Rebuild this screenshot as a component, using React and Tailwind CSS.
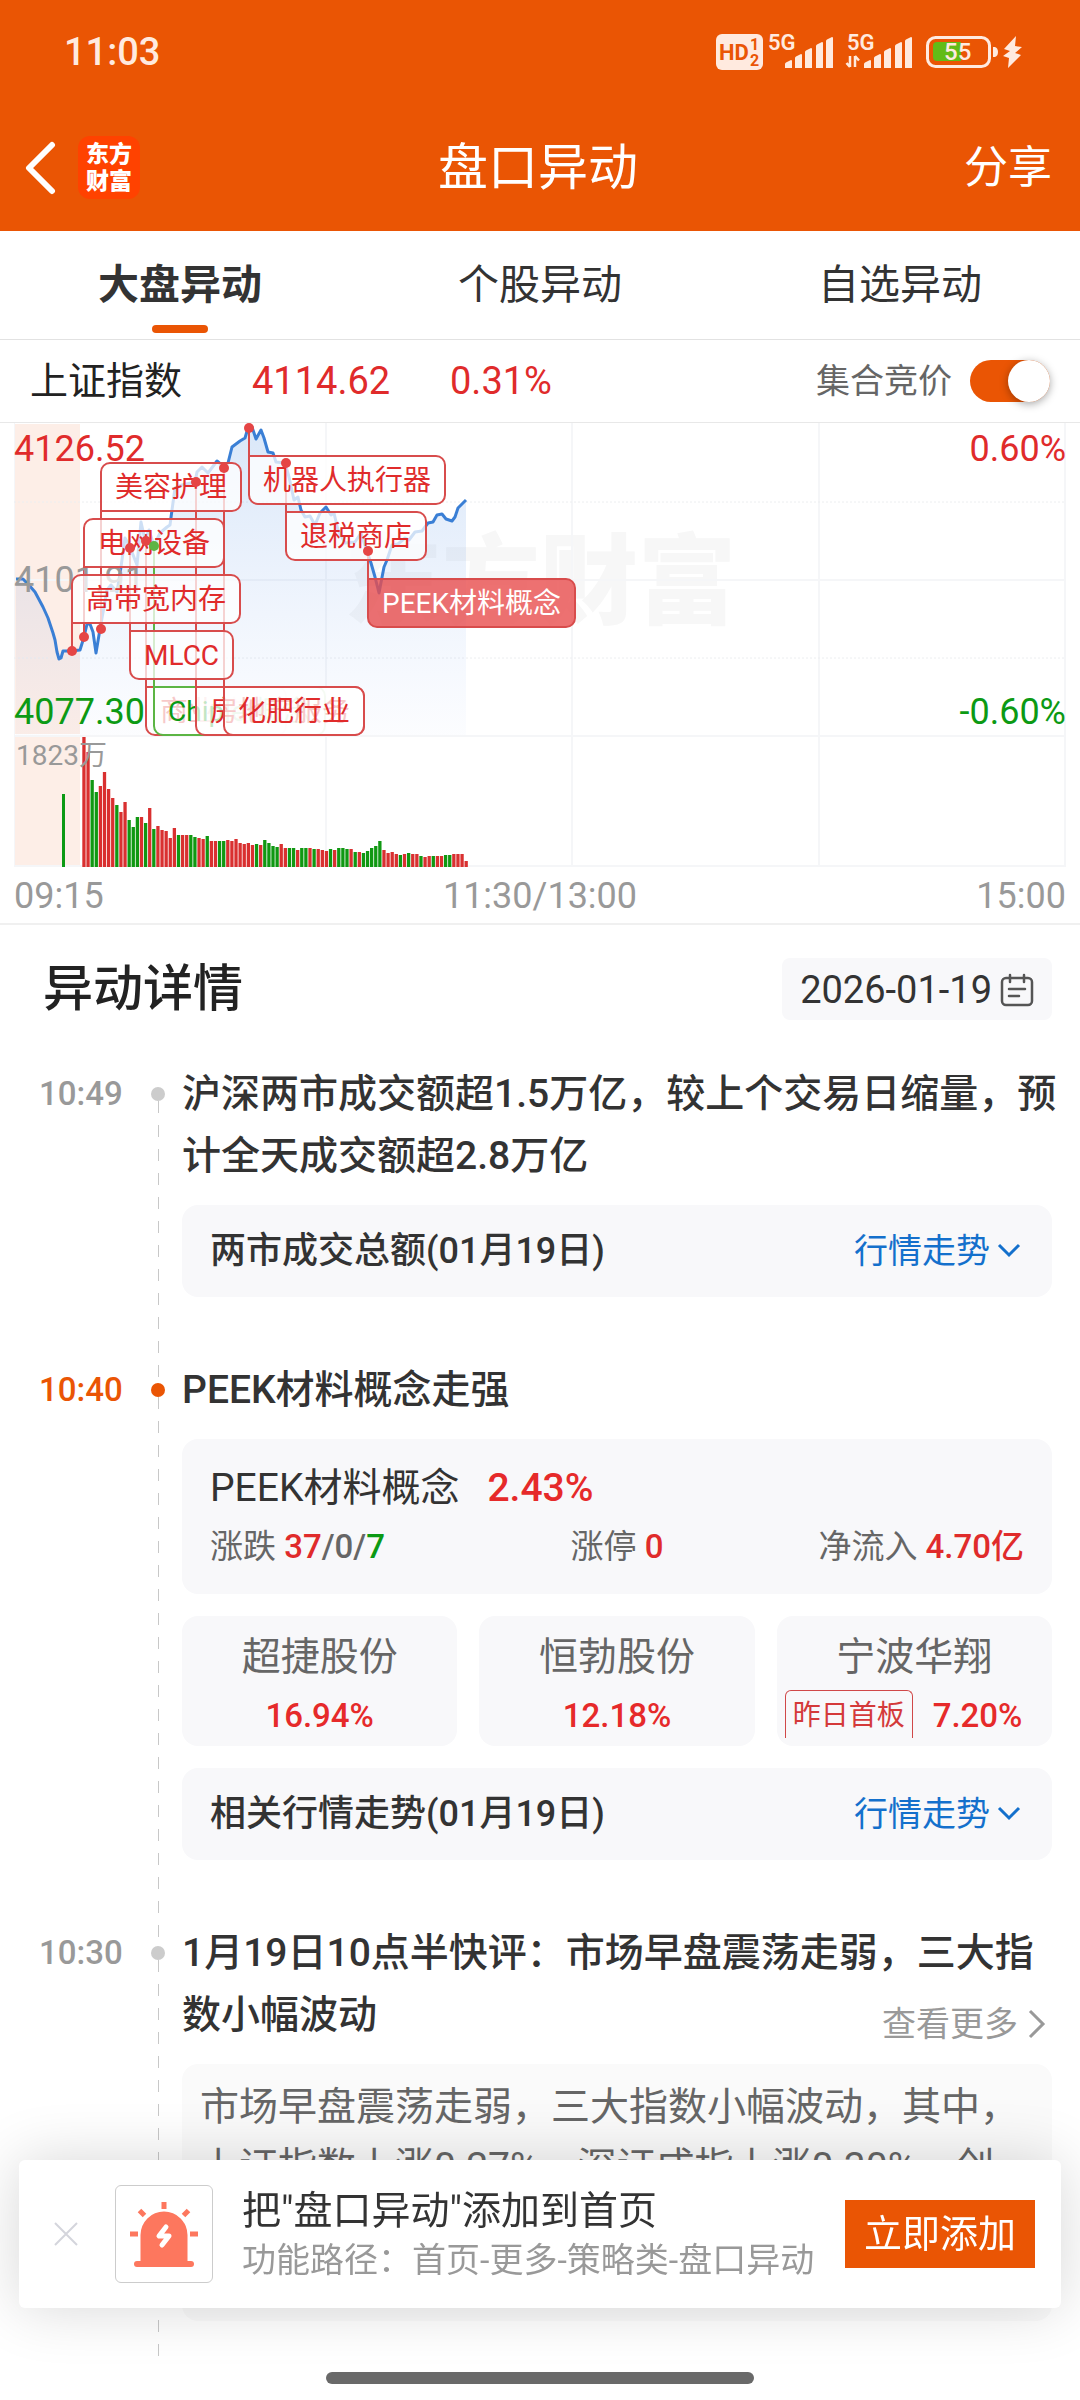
import { useState } from 'react';

const TABS = ['大盘异动', '个股异动', '自选异动'];

// chart area: 1052 x 444 units, price panel on top (0-312), volume below (314-444)
const CHART_W = 1052;
const CHART_H = 444;

const PRICE = [
  [2, 156], [9, 156], [14, 161], [21, 169], [29, 184], [34, 195], [39, 210], [41, 217], [43, 229], [45, 236],
  [47, 235], [49, 228], [57, 228], [66, 227], [70, 214], [73, 201], [76, 201], [79, 209], [82, 230], [86, 206],
  [90, 184], [93, 167], [97, 162], [103, 169], [107, 144], [111, 115], [116, 124], [123, 142], [127, 99], [131, 117],
  [135, 107], [140, 123], [146, 110], [153, 104], [156, 102], [158, 87], [161, 65], [168, 62], [181, 59], [183, 49],
  [188, 44], [194, 50], [203, 38], [210, 44], [214, 40], [218, 24], [226, 18], [231, 15], [234, 5], [238, 4],
  [242, 16], [247, 7], [250, 15], [254, 29], [259, 30], [262, 39], [271, 40], [275, 54], [280, 77], [284, 74],
  [287, 87], [291, 94], [296, 93], [301, 102], [306, 90], [312, 84], [317, 92], [320, 90], [324, 107], [331, 120],
  [341, 119], [347, 110], [353, 129], [357, 140], [361, 154], [365, 170], [370, 144], [373, 137], [378, 122], [384, 121],
  [391, 115], [395, 117], [401, 109], [408, 108], [414, 100], [419, 99], [423, 92], [428, 91], [432, 96], [438, 98],
  [441, 94], [444, 85], [452, 77],
];

const VOLUME =
  'r130 r115 g87 g75 r81 r95 r78 r69 g62 r55 r65 g47 g40 g50 r50 g44 r59 g38 r41 r37 r36 r29 r39 g32 r32 r32 g32 g30 r29 r28 g31 r26 r26 g26 g26 r27 r26 r28 r24 r23 r24 r22 g23 r22 g27 g24 g21 g20 r23 r19 g19 g19 r17 g19 g19 r19 g18 r18 r17 r16 g18 r17 g19 g19 g18 r18 g15 r15 g14 g16 g19 g21 g26 r17 r14 r15 r13 g12 r13 g14 r13 r13 g11 r10 r11 g11 r11 r11 g12 g12 r13 r13 r13 r6'
    .split(' ')
    .map((s) => ({ up: s[0] === 'r', h: Number(s.slice(1)) }));

// x: tag and leader position, y: top of the tag, dot: y of the point on the line
const MARKS = [
  { name: '高带宽内存', x: 57, y: 151, dot: 228 },
  { name: '电网设备', x: 69, y: 95, dot: 214 },
  { name: '美容护理', x: 86, y: 39, dot: 206 },
  { name: 'MLCC', x: 115, y: 207, dot: 125 },
  { name: '商业航天', x: 131, y: 263, dot: 118 },
  { name: 'Chiplet概念', x: 139, y: 263, dot: 123, tone: 'down' },
  { name: '房地产服务', x: 181, y: 263, dot: 59 },
  { name: '化肥行业', x: 209, y: 263, dot: 45 },
  { name: '机器人执行器', x: 234, y: 32, dot: 5 },
  { name: '退税商店', x: 271, y: 88, dot: 40 },
  { name: 'PEEK材料概念', x: 353, y: 155, dot: 128, tone: 'active' },
];

const TAG_TONE = {
  up: 'border-[#d84c4c] bg-white/75 text-[#e02b2b]',
  down: 'border-[#5cb544] bg-white/75 text-[#0c9a14]',
  active: 'border-[#d84c4c] bg-[#e94d4d]/80 text-white',
};

function StatusBar() {
  const bars = [
    [0, 26], [10, 20], [20, 14], [31, 8], [41, 3],
  ];
  return (
    <div className="flex h-[104px] items-center justify-between pr-[58px] pl-16 text-[#ffeadf]">
      <span className="text-[38px] leading-none font-medium">11:03</span>
      <svg width="306" height="52" viewBox="0 -8 306 52" fill="currentColor">
        <rect x="0" y="0" width="47" height="36" rx="6" />
        <text x="3" y="26" fontSize="22" fontWeight="700" fill="#ea5504">HD</text>
        <text x="34" y="16" fontSize="16" fontWeight="700" fill="#ea5504">1</text>
        <text x="34" y="32" fontSize="16" fontWeight="700" fill="#ea5504">2</text>
        {[69, 148].map((x) => (
          <g key={x}>
            <text x={x - 17} y="16" fontSize="22" fontWeight="600">5G</text>
            {bars.map(([dx, top]) => (
              <path key={dx} d={`M${x + dx} 34V${top + 4}q0-1 1-1.500l5-2.500q1 0 1 1V34z`} />
            ))}
          </g>
        ))}
        <path d="M134 22v11M134 33l-3.500-4M139 33V22M139 22l4 4.500" fill="none" stroke="currentColor" strokeWidth="2.500" />
        <rect x="211.500" y="3.500" width="62" height="29" rx="8" fill="none" stroke="currentColor" strokeWidth="3" />
        <path d="M217 12q0-4 4-4h24v19h-24q-4 0-4-4z" fill="#62bb17" />
        <path d="M277 13h2q3 1 3 5t-3 5h-2z" />
        <text x="228" y="26" fontSize="24" fontWeight="500">55</text>
        <path d="M300 2l-12 13 6 2-7 5 6 2-1 10 13-13-6-2 7-6-7-1z" />
      </svg>
    </div>
  );
}

function NavBar() {
  return (
    <div className="grid h-[127px] grid-cols-3 items-center pr-7 pl-6 text-white">
      <div className="flex items-center gap-[22px]">
        <button type="button" aria-label="返回">
          <svg width="32" height="54" viewBox="0 0 32 54" fill="none" stroke="currentColor" strokeWidth="6" strokeLinecap="round" strokeLinejoin="round">
            <path d="M28 4L5 27l23 23" />
          </svg>
        </button>
        <span className="flex h-[63px] w-[62px] flex-col items-center justify-center rounded-xl bg-[#ff4200] text-[23px] leading-[27px] font-black">
          <span>东方</span>
          <span>财富</span>
        </span>
      </div>
      <h1 className="text-center text-[50px] leading-none">盘口异动</h1>
      <button type="button" className="justify-self-end text-[44px] leading-none">
        分享
      </button>
    </div>
  );
}

function IndexRow({ auction, onToggle }) {
  return (
    <div className="flex h-[83px] items-center justify-between border-b border-[#e8e8e8] px-[30px]">
      <div className="flex items-center text-[38px] leading-none text-[#e02b2b]">
        <span className="w-[222px] text-[#222]">上证指数</span>
        <span className="w-[198px]">4114.62</span>
        <span>0.31%</span>
      </div>
      <label className="flex items-center gap-[18px] text-[34px] leading-none text-[#666]">
        集合竞价
        <input
          type="checkbox"
          role="switch"
          checked={auction}
          onChange={onToggle}
          className="flex h-[42px] w-20 appearance-none rounded-full bg-gray-300 before:h-[42px] before:w-[42px] before:rounded-full before:bg-white before:shadow-[0_2px_8px_rgba(0,0,0,0.35)] checked:justify-end checked:bg-[#ea5504]"
        />
      </label>
    </div>
  );
}

function Chart() {
  const line = PRICE.map(([x, y]) => `${x},${y}`).join(' ');
  return (
    <div className="relative mx-[14px] h-[444px] text-[36px] leading-none">
      <span className="absolute inset-x-0 top-[111px] text-center text-[98px] font-black text-[#f7f7f7]">东方财富</span>
      <svg className="absolute inset-0 h-full w-full" viewBox={`0 0 ${CHART_W} ${CHART_H}`} preserveAspectRatio="none">
        <defs>
          <linearGradient id="area" x1="0" y1="0" x2="0" y2="1">
            <stop offset="0" stopColor="#2f7ddb" stopOpacity="0.18" />
            <stop offset="1" stopColor="#5b8def" stopOpacity="0.02" />
          </linearGradient>
        </defs>
        <rect x="1" y="1" width="65" height="310" fill="#fdeee7" />
        <rect x="1" y="314" width="65" height="129" fill="#fdeee7" />
        <g stroke="#f5f6f8" strokeWidth="2">
          <path d="M0 157H1052M0 313H1052M0 443H1052M0 0V443M312 0V443M558 0V443M805 0V443M1051 0V443" />
          <path d="M0 79H1052M0 235H1052" strokeDasharray="2 2" strokeWidth="1" stroke="#eceef0" />
        </g>
        <polygon points={`2,312 ${line} 452,312`} fill="url(#area)" />
        <polyline points={line} fill="none" stroke="#3a7fd5" strokeWidth="3" strokeLinejoin="round" />
        <rect x="48" y="371" width="3" height="73" fill="#0c9a14" />
        {VOLUME.map((v, i) => (
          <rect
            key={i}
            x={68.3 + i * 4.11}
            y={CHART_H - v.h}
            width="3.300"
            height={v.h}
            fill={v.up ? '#d93030' : '#109812'}
          />
        ))}
        {MARKS.map((m) => (
          <path
            key={m.name}
            d={`M${m.x + 1} ${m.dot}V${m.y + 24}`}
            stroke={m.tone === 'down' ? '#5cb544' : '#d84c4c'}
            strokeWidth="2"
          />
        ))}
      </svg>

      <span className="absolute top-2 left-0 text-[#e02b2b]">4126.52</span>
      <span className="absolute top-[139px] left-0 text-[#999]">4101.91</span>
      <span className="absolute top-[271px] left-0 text-[#0c9a14]">4077.30</span>
      <span className="absolute top-2 right-0 text-[#e02b2b]">0.60%</span>
      <span className="absolute top-[271px] right-0 text-[#0c9a14]">-0.60%</span>
      <span className="absolute top-[319px] left-[2px] text-[28px] text-[#999]">1823万</span>

      {MARKS.map((m) => (
        <span
          key={m.name}
          className={`absolute flex h-[50px] items-center rounded-[10px] border-2 px-[13px] pt-[2px] text-[28px] whitespace-nowrap ${
            m.dot < m.y ? 'rounded-tl-none' : 'rounded-bl-none'
          } ${TAG_TONE[m.tone || 'up']}`}
          style={{ left: `${(m.x / CHART_W) * 100}%`, top: m.y }}
        >
          {m.name}
        </span>
      ))}

      <svg className="absolute inset-0 h-full w-full overflow-visible" viewBox={`0 0 ${CHART_W} ${CHART_H}`} preserveAspectRatio="none">
        {MARKS.map((m) => (
          <circle key={m.name} cx={m.x + 1} cy={m.dot} r="5" fill={m.tone === 'down' ? '#5cb544' : '#e54545'} />
        ))}
      </svg>
    </div>
  );
}

function CalendarIcon() {
  return (
    <svg width="34" height="34" viewBox="0 -2 34 34" fill="none" stroke="#555" strokeWidth="2.500" strokeLinecap="round">
      <rect x="2" y="3" width="30" height="27" rx="4" />
      <path d="M10 0v7M24 0v7M9 14h16M9 21h10" />
    </svg>
  );
}

function TimelineItem({ time, active, last, children }) {
  return (
    <li className="flex">
      <time className={`w-[112px] shrink-0 text-[33px] leading-[62px] font-medium ${active ? 'text-[#ea5504]' : 'text-[#999]'}`}>
        {time}
      </time>
      {/* the dashed rail runs on to the dot of the next item */}
      <div className={`flex w-[31px] shrink-0 flex-col pt-6 ${last ? '' : '-mb-6'}`}>
        <span className={`size-[14px] shrink-0 rounded-full ${active ? 'bg-[#ea5504]' : 'bg-[#ccc]'}`} />
        <span className="ml-[7px] w-px grow bg-[repeating-linear-gradient(to_bottom,#c8c8c8_0_12px,transparent_12px_24px)]" />
      </div>
      <div className={`min-w-0 grow ${last ? 'pb-9' : 'pb-[62px]'}`}>{children}</div>
    </li>
  );
}

function ItemTitle({ children }) {
  return <h3 className="text-[39px] leading-[62px] font-medium whitespace-nowrap text-[#333]">{children}</h3>;
}

function TrendCard({ title }) {
  return (
    <div className="flex h-[92px] items-center justify-between rounded-2xl bg-[#f8f8fa] px-7">
      <span className="text-[36px] leading-none font-medium text-[#333]">{title}</span>
      <button type="button" className="flex items-center gap-[6px] text-[34px] leading-none text-[#1470cc]">
        行情走势
        <svg width="28" height="18" viewBox="0 0 28 18" fill="none" stroke="currentColor" strokeWidth="3">
          <path d="M3 3l10 10L23 3" />
        </svg>
      </button>
    </div>
  );
}

function StockCard({ name, change, tag }) {
  return (
    <div className="flex h-[130px] flex-col gap-1 overflow-hidden rounded-2xl bg-[#f8f8fa] pt-3">
      <span className="text-center text-[39px] leading-[58px] text-[#666]">{name}</span>
      <div className={`flex items-start gap-5 ${tag ? 'pl-2' : 'justify-center'}`}>
        {tag && (
          <span className="h-12 shrink-0 rounded-t-md border border-b-0 border-[#d04848] px-[7px] text-[28px] leading-[50px] text-[#d43a3a]">
            {tag}
          </span>
        )}
        <span className="text-[33px] leading-[52px] font-medium text-[#e62a2a]">{change}</span>
      </div>
    </div>
  );
}

function AddBanner({ onClose }) {
  return (
    <div className="fixed inset-x-[19px] bottom-[92px] flex h-[148px] items-center rounded-md bg-white pr-[26px] pl-8 shadow-[0_0_60px_rgba(0,0,0,0.16)]">
      <button type="button" aria-label="关闭" onClick={onClose} className="mr-[34px]">
        <svg width="30" height="30" viewBox="0 0 30 30" stroke="#d4d5dc" strokeWidth="2">
          <path d="M4 4l22 22M26 4L4 26" />
        </svg>
      </button>
      <span className="mr-[29px] flex size-[98px] shrink-0 items-center justify-center rounded-md border border-[#ccc]">
        <svg width="68" height="66" viewBox="0 0 68 66">
          <g fill="#fd775e">
            <path d="M10.500 60V34a23.500 23.500 0 0 1 47 0v26z" />
            <rect x="4" y="60" width="60" height="6" rx="3" />
          </g>
          <g stroke="#fd775e" strokeWidth="5">
            <path d="M34 1v7M9.500 9.500l5 5M58.500 9.500l-5 5M0 33h8M60 33h8" />
          </g>
          <path d="M36 26l-7 9h10l-7 9" fill="none" stroke="#fff" strokeWidth="5" strokeLinecap="round" strokeLinejoin="round" />
        </svg>
      </span>
      <div className="grow whitespace-nowrap">
        <p className="text-[39px] leading-[52px] text-[#333]">把"盘口异动"添加到首页</p>
        <p className="text-[34px] leading-[46px] text-[#999]">功能路径：首页-更多-策略类-盘口异动</p>
      </div>
      <button type="button" className="h-[68px] w-[190px] shrink-0 bg-[#ea5504] text-[38px] leading-none text-white">
        立即添加
      </button>
    </div>
  );
}

export default function App() {
  const [tab, setTab] = useState(0);
  const [auction, setAuction] = useState(true);
  const [showBanner, setShowBanner] = useState(true);

  return (
    <div lang="zh-CN" className="min-h-screen bg-white pb-[43px] font-[Roboto,'Noto_Sans_CJK_SC',sans-serif]">
      <header className="bg-[#ea5504]">
        <StatusBar />
        <NavBar />
      </header>

      <nav className="grid h-[109px] grid-cols-3 border-b border-[#e2e2e2]">
        {TABS.map((name, i) => (
          <button
            key={name}
            type="button"
            onClick={() => setTab(i)}
            className={`flex flex-col items-center justify-between pt-[30px] pb-[6px] text-[41px] leading-[48px] text-[#333] ${
              tab === i ? 'font-bold' : ''
            }`}
          >
            {name}
            <span className={`h-2 w-14 rounded-full ${tab === i ? 'bg-[#ea5504]' : ''}`} />
          </button>
        ))}
      </nav>

      <IndexRow auction={auction} onToggle={() => setAuction(!auction)} />
      <Chart />
      <div className="grid h-[58px] grid-cols-3 items-center border-b-2 border-[#f0f0f0] px-[14px] pt-[2px] text-[36px] leading-none text-[#999]">
        <span>09:15</span>
        <span className="text-center">11:30/13:00</span>
        <span className="text-right">15:00</span>
      </div>

      <section className="pt-[33px] pr-7 pl-[39px]">
        <div className="mb-[43px] flex h-[62px] items-center justify-between pl-1">
          <h2 className="text-[50px] leading-[54px] font-medium text-[#222]">异动详情</h2>
          <button type="button" className="flex h-[62px] items-center gap-2 rounded-lg bg-[#f8f8fa] px-[18px] pt-[2px] text-[38px] leading-none text-[#333]">
            2026-01-19
            <CalendarIcon />
          </button>
        </div>

        <ol>
          <TimelineItem time="10:49">
            <ItemTitle>
              沪深两市成交额超1.5万亿，较上个交易日缩量，预
              <br />
              计全天成交额超2.8万亿
            </ItemTitle>
            <div className="mt-[18px]">
              <TrendCard title="两市成交总额(01月19日)" />
            </div>
          </TimelineItem>

          <TimelineItem time="10:40" active>
            <ItemTitle>PEEK材料概念走强</ItemTitle>
            <div className="mt-[18px] flex flex-col gap-[22px]">
              <div className="h-[155px] rounded-2xl bg-[#f8f8fa] px-7 pt-5 text-[#333]">
                <div className="flex items-center gap-7 text-[39px] leading-[58px]">
                  <span>PEEK材料概念</span>
                  <span className="font-medium text-[#e62a2a]">2.43%</span>
                </div>
                <div className="grid grid-cols-3 gap-2 text-[33px] leading-[60px] text-[#666]">
                  <span>
                    涨跌{' '}
                    <span className="font-medium">
                      <span className="text-[#e02b2b]">37</span>/0/<span className="text-[#0c9a14]">7</span>
                    </span>
                  </span>
                  <span className="text-center">
                    涨停 <span className="font-medium text-[#e02b2b]">0</span>
                  </span>
                  <span className="text-right">
                    净流入 <span className="font-medium text-[#e02b2b]">4.70亿</span>
                  </span>
                </div>
              </div>
              <div className="grid grid-cols-3 gap-[22px]">
                <StockCard name="超捷股份" change="16.94%" />
                <StockCard name="恒勃股份" change="12.18%" />
                <StockCard name="宁波华翔" change="7.20%" tag="昨日首板" />
              </div>
              <TrendCard title="相关行情走势(01月19日)" />
            </div>
          </TimelineItem>

          <TimelineItem time="10:30" last>
            <div className="relative">
              <ItemTitle>
                1月19日10点半快评：市场早盘震荡走弱，三大指
                <br />
                数小幅波动
              </ItemTitle>
              <a href="#more" className="absolute right-1 bottom-0 flex items-center gap-2 text-[34px] leading-[44px] text-[#999]">
                查看更多
                <svg width="22" height="32" viewBox="0 0 22 32" fill="none" stroke="currentColor" strokeWidth="3">
                  <path d="M4 3l13 13L4 29" />
                </svg>
              </a>
            </div>
            <p className="mt-[18px] min-h-[257px] rounded-2xl bg-[#fafafa] px-[18px] pt-[13px] text-[39px] leading-[60px] whitespace-nowrap text-[#666]">
              市场早盘震荡走弱，三大指数小幅波动，其中，
              <br />
              上证指数上涨0.27%，深证成指上涨0.30%，创
            </p>
          </TimelineItem>
        </ol>
      </section>

      {showBanner && <AddBanner onClose={() => setShowBanner(false)} />}
      <div className="fixed bottom-4 left-1/2 h-3 w-[428px] -translate-x-1/2 rounded-full bg-[#696969]" />
    </div>
  );
}
